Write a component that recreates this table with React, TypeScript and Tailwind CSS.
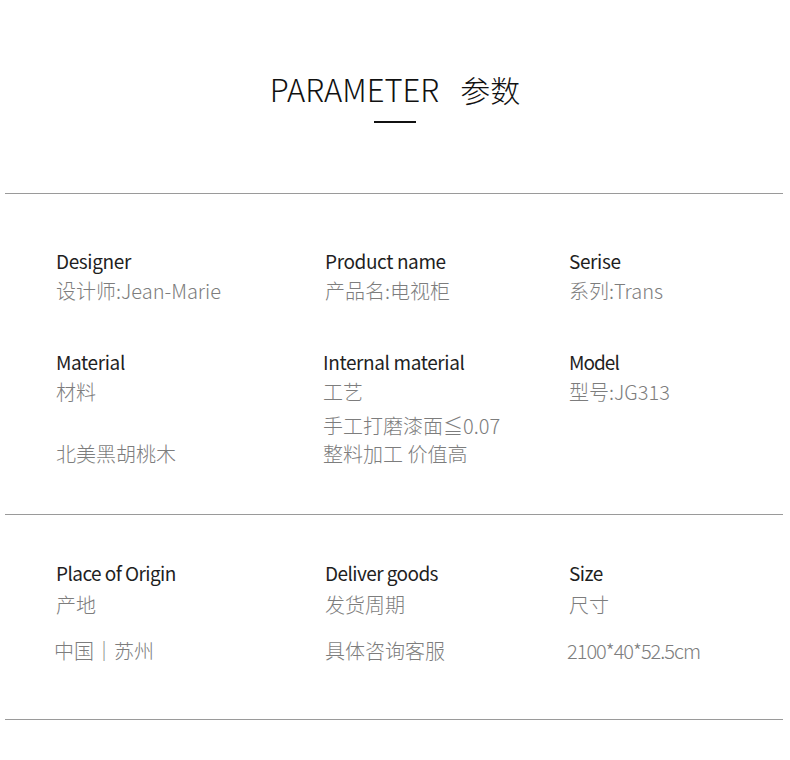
import React from 'react';

type Cell = {
  label: string;
  value: string;
  extra?: string[];
  labelClass?: string;
  extraClass?: string;
  shift?: string;
};

const rowsTop: Cell[][] = [
  [
    { label: 'Designer', value: '设计师:Jean-Marie' },
    { label: 'Product name', value: '产品名:电视柜' },
    { label: 'Serise', value: '系列:Trans' },
  ],
  [
    { label: 'Material', value: '材料', extra: ['\u00a0', '北美黑胡桃木'] },
    {
      label: 'Internal material',
      value: '工艺',
      extra: ['手工打磨漆面≦0.07', '整料加工 价值高'],
      shift: '-ml-[2px]',
    },
    { label: 'Model', value: '型号:JG313', labelClass: 'tracking-[-0.05em]' },
  ],
];

const rowsBottom: Cell[] = [
  {
    label: 'Place of Origin',
    value: '产地',
    extra: ['中国｜苏州'],
    labelClass: 'tracking-[-0.03em]',
    extraClass: '-ml-[2px]',
  },
  { label: 'Deliver goods', value: '发货周期', extra: ['具体咨询客服'], labelClass: 'tracking-[-0.03em]' },
  {
    label: 'Size',
    value: '尺寸',
    extra: ['2100*40*52.5cm'],
    labelClass: 'tracking-[-0.03em]',
    extraClass: 'tracking-[-0.05em] -ml-[2px]',
  },
];

const font = { fontFamily: '"Noto Sans CJK SC", "Noto Sans", sans-serif' };

function ParamCell({ cell, gapExtra, valueGap }: { cell: Cell; gapExtra: string; valueGap: string }) {
  return (
    <div className={`flex flex-col ${cell.shift ?? ''}`}>
      <div className={`text-[19px] leading-[30px] text-[#1f1f1f] tracking-[-0.02em] ${cell.labelClass ?? ''}`}>
        {cell.label}
      </div>
      <div className={`text-[20px] leading-[30px] font-light text-[#7d7d7d] ${valueGap}`}>{cell.value}</div>
      {cell.extra && (
        <div className={`flex flex-col ${gapExtra}`}>
          {cell.extra.map((line, i) => (
            <div
              key={i}
              className={`text-[20px] leading-[28px] font-light text-[#7d7d7d] whitespace-pre ${cell.extraClass ?? ''}`}
            >
              {line}
            </div>
          ))}
        </div>
      )}
    </div>
  );
}

export default function App() {
  return (
    <div className="w-[790px] h-[760px] bg-white" style={font}>
      <div className="flex flex-col items-center pt-[67px]">
        <h1 className="flex items-center text-[31px] leading-[44px] text-[#111] font-light">
          <span>PARAMETER</span>
          <span className="ml-[21px] text-[30px]">参数</span>
        </h1>
        <div className="mt-[10px] w-[42px] h-[2px] bg-[#111]" />
      </div>

      <div className="mt-[70px] mx-[5px] w-[778px] h-px bg-[#9a9a9a]" />

      <div className="flex flex-col gap-[41px] pt-[52px] pb-[46px] pl-[56px]">
        {rowsTop.map((row, r) => (
          <div key={r} className="grid grid-cols-[269px_244px_1fr]">
            {row.map((cell) => (
              <ParamCell key={cell.label} cell={cell} gapExtra="mt-[5px]" valueGap="" />
            ))}
          </div>
        ))}
      </div>

      <div className="mx-[5px] w-[778px] h-px bg-[#9a9a9a]" />

      <div className="pt-[43px] pb-[54px] pl-[56px]">
        <div className="grid grid-cols-[269px_244px_1fr]">
          {rowsBottom.map((cell) => (
            <ParamCell key={cell.label} cell={cell} gapExtra="mt-[17px]" valueGap="mt-[2px]" />
          ))}
        </div>
      </div>

      <div className="mx-[5px] w-[778px] h-px bg-[#9a9a9a]" />
    </div>
  );
}
